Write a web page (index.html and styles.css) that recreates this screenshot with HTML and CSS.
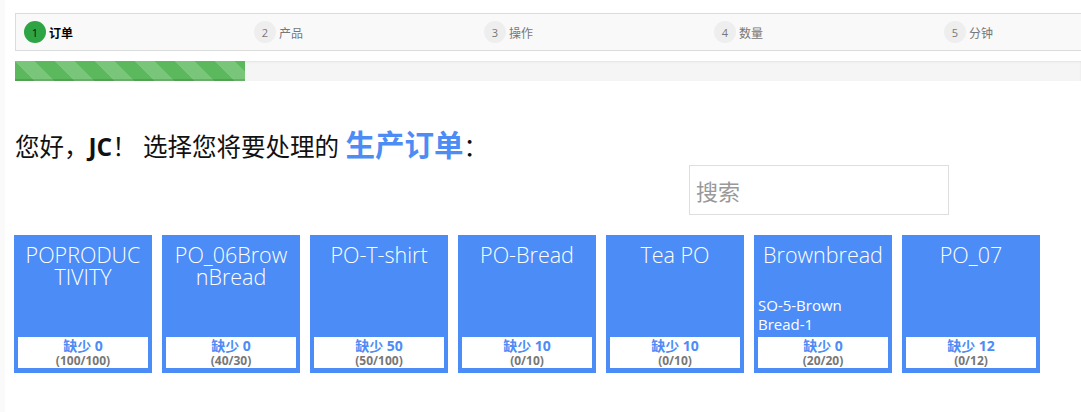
FILE: index.html
```html
<!DOCTYPE html>
<html>
<head>
<meta charset="utf-8">
<link rel="stylesheet" href="styles.css">
</head>
<body>
<div class="page">
  <div class="steps">
    <div class="step active"><span class="num">1</span><span class="lbl">订单</span></div>
    <div class="step"><span class="num">2</span><span class="lbl">产品</span></div>
    <div class="step"><span class="num">3</span><span class="lbl">操作</span></div>
    <div class="step"><span class="num">4</span><span class="lbl">数量</span></div>
    <div class="step"><span class="num">5</span><span class="lbl">分钟</span></div>
  </div>
  <div class="progress"><div class="progress-fill" style="width:230px"></div></div>

  <h1 class="greet">您好，<b>JC</b>！ 选择您将要处理的 <span class="hl">生产订单</span>：</h1>

  <div class="search-row"><input class="search" type="text" placeholder="搜索"></div>

  <div class="cards">
    <div class="card"><div class="title">POPRODUCTIVITY</div><div class="foot"><div class="miss">缺少 0</div><div class="cnt">(100/100)</div></div></div>
    <div class="card"><div class="title">PO_06BrownBread</div><div class="foot"><div class="miss">缺少 0</div><div class="cnt">(40/30)</div></div></div>
    <div class="card"><div class="title">PO-T-shirt</div><div class="foot"><div class="miss">缺少 50</div><div class="cnt">(50/100)</div></div></div>
    <div class="card"><div class="title">PO-Bread</div><div class="foot"><div class="miss">缺少 10</div><div class="cnt">(0/10)</div></div></div>
    <div class="card"><div class="title">Tea PO</div><div class="foot"><div class="miss">缺少 10</div><div class="cnt">(0/10)</div></div></div>
    <div class="card"><div class="title">Brownbread</div><div class="sub">SO-5-Brown<br>Bread-1</div><div class="foot"><div class="miss">缺少 0</div><div class="cnt">(20/20)</div></div></div>
    <div class="card"><div class="title">PO_07</div><div class="foot"><div class="miss">缺少 12</div><div class="cnt">(0/12)</div></div></div>
  </div>
</div>
</body>
</html>
```

FILE: styles.css
```css
html, body {
  margin: 0;
  padding: 0;
  background: #fff;
  overflow: hidden;
}
body {
  font-family: "Open Sans", "Noto Sans CJK SC", sans-serif;
  color: #222;
}
.page {
  width: 1081px;
  padding: 13px 0 0 10px;
  border-left: 5px solid #fafafa;
  box-sizing: border-box;
  min-height: 412px;
}
.steps {
  display: flex;
  height: 36px;
  border: 1px solid #dcdcdc;
  border-right: none;
  background: #f9f9f9;
  align-items: center;
  padding-left: 8px;
  overflow: hidden;
}
.step {
  width: 230px;
  flex-shrink: 0;
  display: flex;
  align-items: center;
  font-size: 12px;
  color: #777;
}
.num {
  width: 22px;
  height: 22px;
  border-radius: 50%;
  background: #eee;
  color: #777;
  font-size: 11px;
  display: flex;
  align-items: center;
  justify-content: center;
  margin-right: 3px;
  font-family: "Open Sans", sans-serif;
}
.step.active .num {
  background: #2ea444;
  color: #111;
}
.step.active .lbl {
  color: #000;
  font-weight: bold;
}
.lbl {
  font-family: "Noto Sans CJK SC", sans-serif;
}
.progress {
  margin-top: 10px;
  height: 20px;
  background: #f5f5f5;
  box-shadow: inset 0 1px 2px rgba(0,0,0,0.08);
}
.progress-fill {
  height: 20px;
  background-color: #5cb85c;
  background-image: linear-gradient(45deg, rgba(255,255,255,.18) 25%, transparent 25%, transparent 50%, rgba(255,255,255,.18) 50%, rgba(255,255,255,.18) 75%, transparent 75%, transparent);
  background-size: 40px 40px;
  box-shadow: inset 0 -2px 0 rgba(0,0,0,.12);
}
.greet {
  margin: 46px 0 0 0;
  font-size: 24.5px;
  font-weight: normal;
  line-height: 36px;
  font-family: "Open Sans", "Noto Sans CJK SC", sans-serif;
  color: #111;
  white-space: nowrap;
}
.greet b {
  font-weight: bold;
}
.hl {
  color: #4d8cf4;
  font-weight: bold;
  font-size: 29.5px;
}
.search-row {
  padding-left: 674px;
  margin-top: 0;
}
.search {
  width: 260px;
  height: 50px;
  box-sizing: border-box;
  border: 1px solid #dedede;
  font-size: 22px;
  padding: 0 6px;
  font-family: "Noto Sans CJK SC", sans-serif;
  color: #333;
  outline: none;
  display: block;
}
.search::placeholder {
  color: #999;
}
.cards {
  display: flex;
  gap: 10px;
  margin-top: 20px;
  margin-left: -1px;
}
.card {
  width: 138px;
  height: 138px;
  flex-shrink: 0;
  background: #4b8cf7;
  box-sizing: border-box;
  padding: 0 4px 5px 4px;
  display: flex;
  flex-direction: column;
  color: #fff;
}
.title {
  font-size: 21.5px;
  line-height: 22px;
  text-align: center;
  padding: 9px 5px 0 5px;
  word-break: break-all;
  font-weight: 300;
  flex: 1;
}
.sub {
  font-size: 15px;
  line-height: 19px;
  padding-bottom: 3px;
  font-weight: 500;
}
.foot {
  background: #fff;
  height: 31px;
  flex-shrink: 0;
  text-align: center;
  font-weight: bold;
  display: flex;
  flex-direction: column;
  justify-content: center;
}
.miss {
  color: #4b8cf7;
  font-size: 14px;
  line-height: 16px;
}
.cnt {
  color: #777;
  font-size: 12px;
  line-height: 14px;
}
```
